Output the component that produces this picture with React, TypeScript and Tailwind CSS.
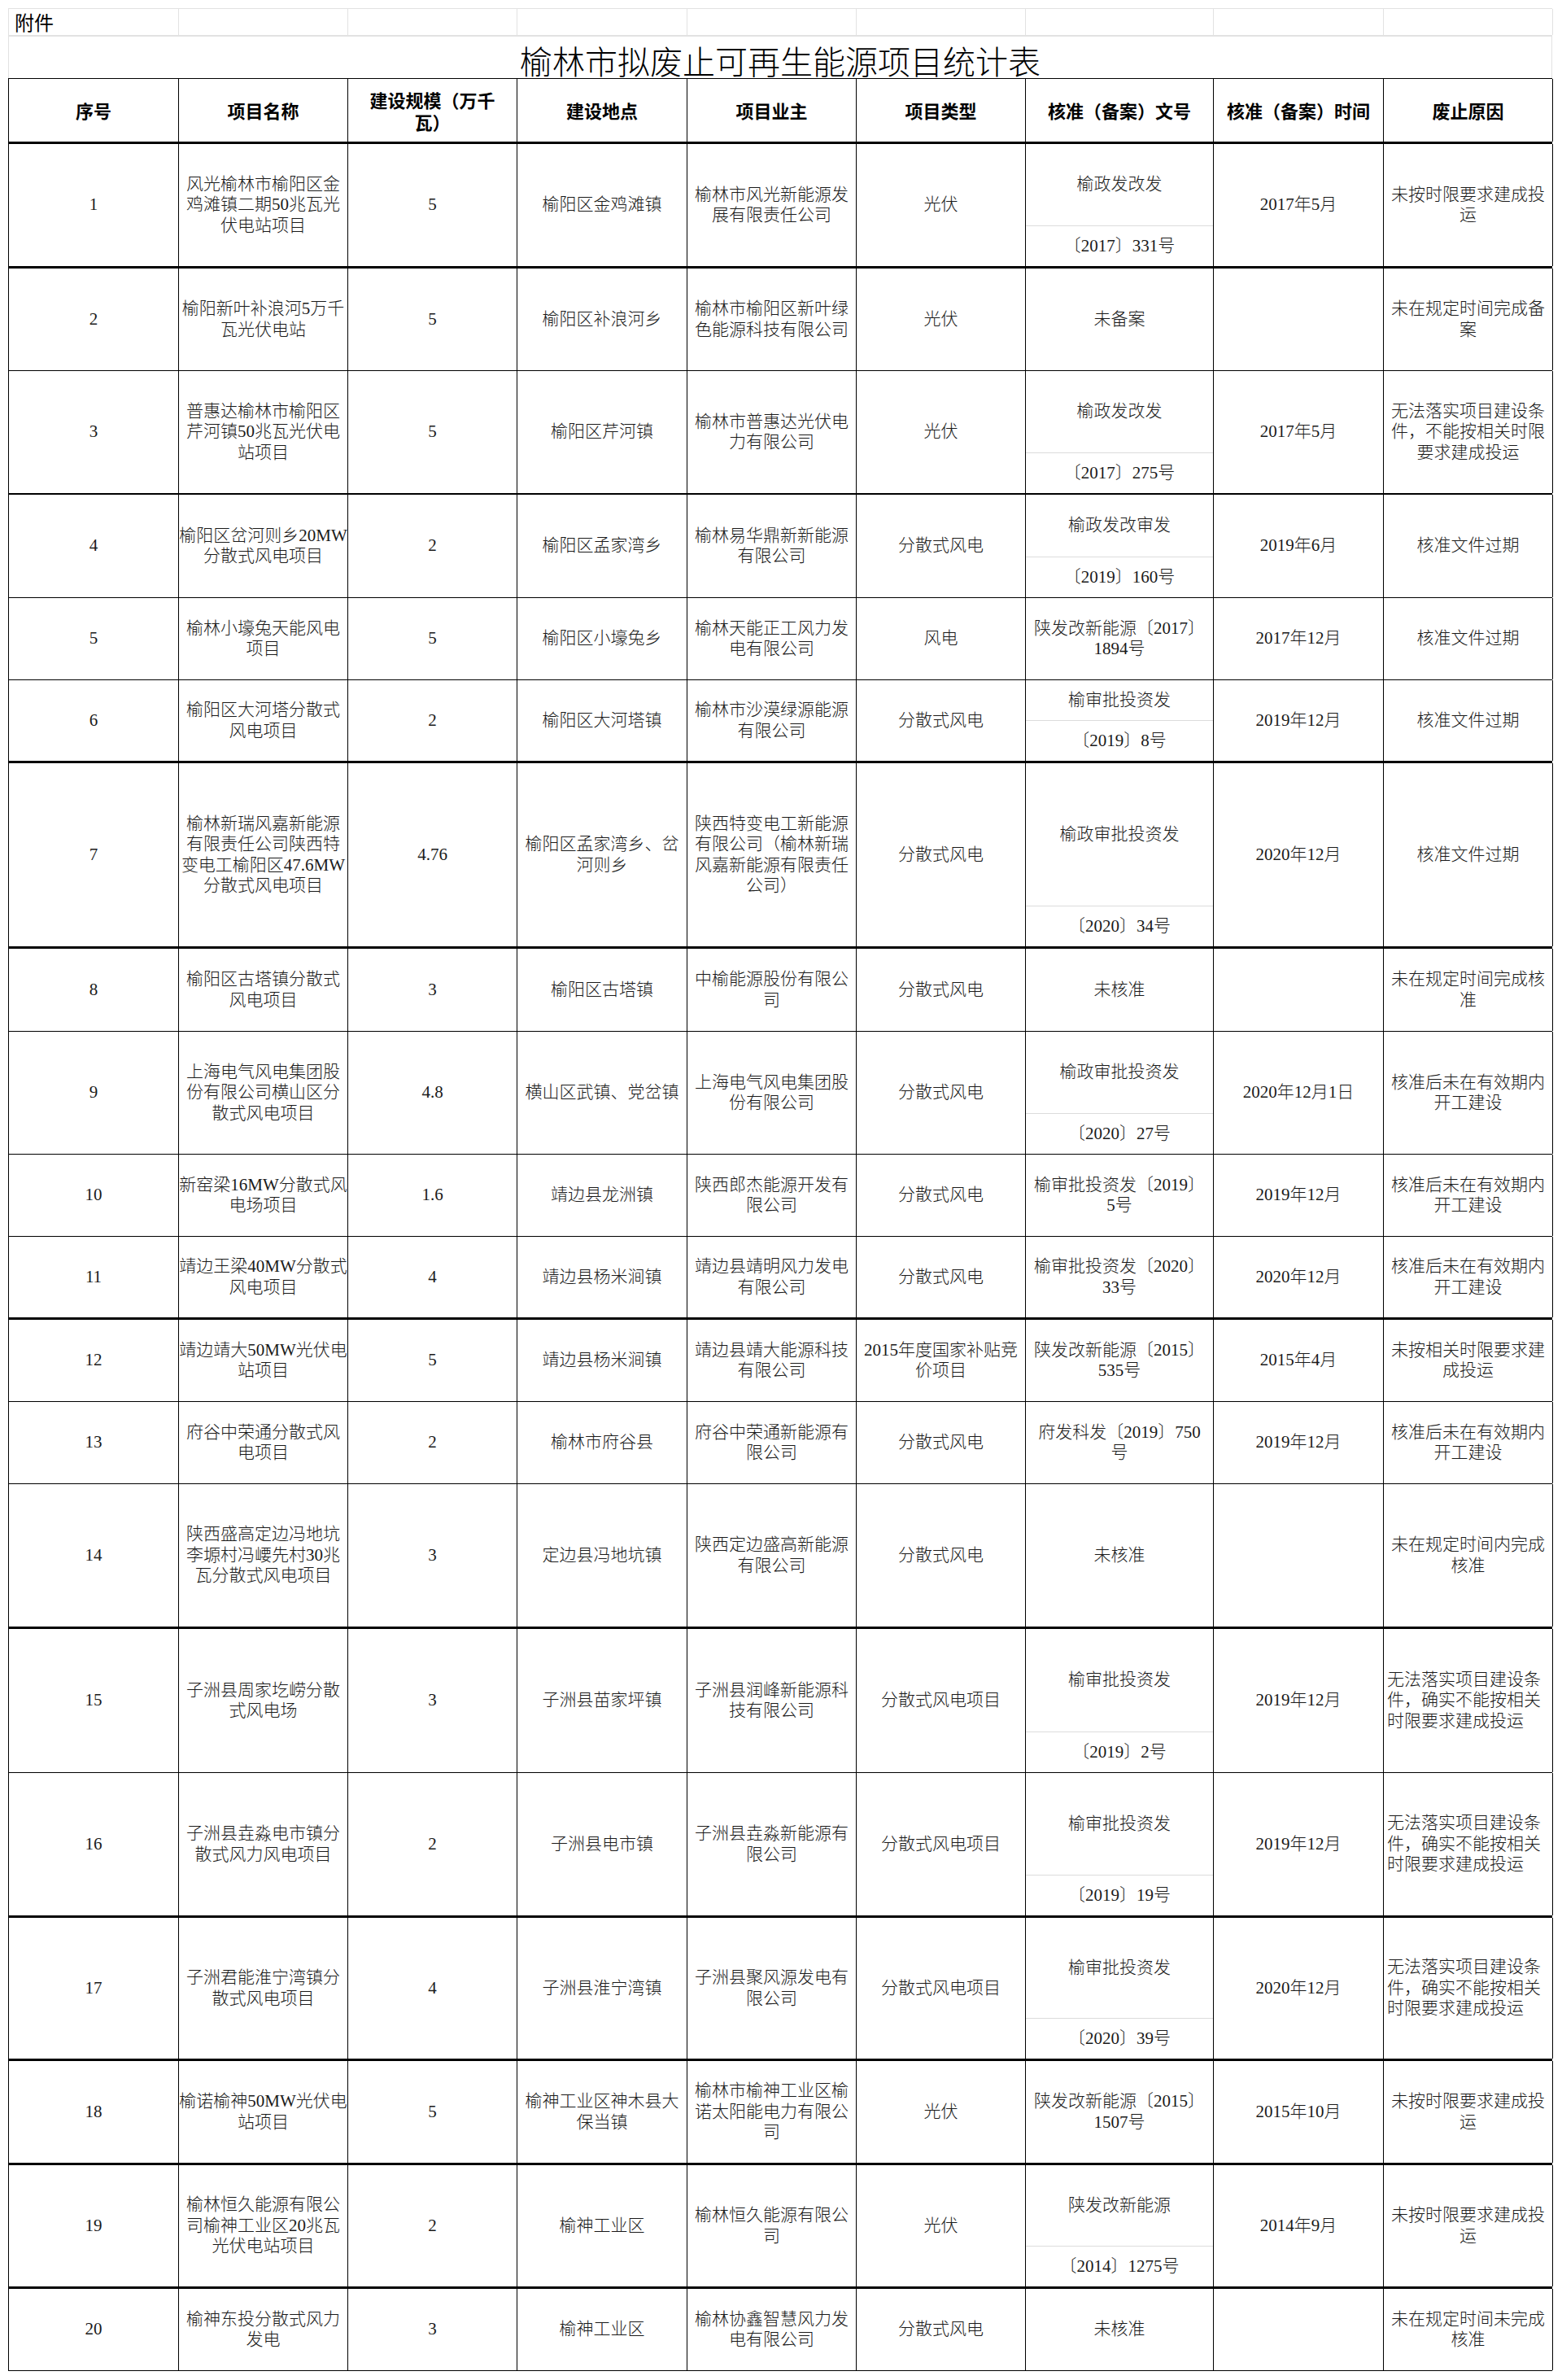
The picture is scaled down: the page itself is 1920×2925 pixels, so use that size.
import React from 'react'

const COLS = 'grid grid-cols-[209px_208px_208px_209px_208px_208px_231px_209px_208px]'

type Split = { top: string; bottom: string }

type RowData = {
  no: string
  h: number
  border?: 1 | 2 | 3
  name: string[]
  scale: string
  loc: string[]
  owner: string[]
  type: string[]
  doc: string[] | Split
  time: string
  reason: string[]
  left?: boolean
}

const NO_TIME_REASON = ['无法落实项目建设条', '件，确实不能按相关', '时限要求建成投运']

const ROWS: RowData[] = [
  { no: '1', h: 153, border: 3, name: ['风光榆林市榆阳区金', '鸡滩镇二期50兆瓦光', '伏电站项目'], scale: '5', loc: ['榆阳区金鸡滩镇'], owner: ['榆林市风光新能源发', '展有限责任公司'], type: ['光伏'], doc: { top: '榆政发改发', bottom: '〔2017〕331号' }, time: '2017年5月', reason: ['未按时限要求建成投', '运'] },
  { no: '2', h: 126, name: ['榆阳新叶补浪河5万千', '瓦光伏电站'], scale: '5', loc: ['榆阳区补浪河乡'], owner: ['榆林市榆阳区新叶绿', '色能源科技有限公司'], type: ['光伏'], doc: ['未备案'], time: '', reason: ['未在规定时间完成备', '案'] },
  { no: '3', h: 152, border: 2, name: ['普惠达榆林市榆阳区', '芹河镇50兆瓦光伏电', '站项目'], scale: '5', loc: ['榆阳区芹河镇'], owner: ['榆林市普惠达光伏电', '力有限公司'], type: ['光伏'], doc: { top: '榆政发改发', bottom: '〔2017〕275号' }, time: '2017年5月', reason: ['无法落实项目建设条', '件，不能按相关时限', '要求建成投运'] },
  { no: '4', h: 127, name: ['榆阳区岔河则乡20MW', '分散式风电项目'], scale: '2', loc: ['榆阳区孟家湾乡'], owner: ['榆林易华鼎新新能源', '有限公司'], type: ['分散式风电'], doc: { top: '榆政发改审发', bottom: '〔2019〕160号' }, time: '2019年6月', reason: ['核准文件过期'] },
  { no: '5', h: 101, name: ['榆林小壕兔天能风电', '项目'], scale: '5', loc: ['榆阳区小壕兔乡'], owner: ['榆林天能正工风力发', '电有限公司'], type: ['风电'], doc: ['陕发改新能源〔2017〕', '1894号'], time: '2017年12月', reason: ['核准文件过期'] },
  { no: '6', h: 102, border: 3, name: ['榆阳区大河塔分散式', '风电项目'], scale: '2', loc: ['榆阳区大河塔镇'], owner: ['榆林市沙漠绿源能源', '有限公司'], type: ['分散式风电'], doc: { top: '榆审批投资发', bottom: '〔2019〕8号' }, time: '2019年12月', reason: ['核准文件过期'] },
  { no: '7', h: 228, border: 3, name: ['榆林新瑞风嘉新能源', '有限责任公司陕西特', '变电工榆阳区47.6MW', '分散式风电项目'], scale: '4.76', loc: ['榆阳区孟家湾乡、岔', '河则乡'], owner: ['陕西特变电工新能源', '有限公司（榆林新瑞', '风嘉新能源有限责任', '公司）'], type: ['分散式风电'], doc: { top: '榆政审批投资发', bottom: '〔2020〕34号' }, time: '2020年12月', reason: ['核准文件过期'] },
  { no: '8', h: 102, name: ['榆阳区古塔镇分散式', '风电项目'], scale: '3', loc: ['榆阳区古塔镇'], owner: ['中榆能源股份有限公', '司'], type: ['分散式风电'], doc: ['未核准'], time: '', reason: ['未在规定时间完成核', '准'] },
  { no: '9', h: 151, name: ['上海电气风电集团股', '份有限公司横山区分', '散式风电项目'], scale: '4.8', loc: ['横山区武镇、党岔镇'], owner: ['上海电气风电集团股', '份有限公司'], type: ['分散式风电'], doc: { top: '榆政审批投资发', bottom: '〔2020〕27号' }, time: '2020年12月1日', reason: ['核准后未在有效期内', '开工建设'] },
  { no: '10', h: 101, name: ['新窑梁16MW分散式风', '电场项目'], scale: '1.6', loc: ['靖边县龙洲镇'], owner: ['陕西郎杰能源开发有', '限公司'], type: ['分散式风电'], doc: ['榆审批投资发〔2019〕', '5号'], time: '2019年12月', reason: ['核准后未在有效期内', '开工建设'] },
  { no: '11', h: 102, border: 3, name: ['靖边王梁40MW分散式', '风电项目'], scale: '4', loc: ['靖边县杨米涧镇'], owner: ['靖边县靖明风力发电', '有限公司'], type: ['分散式风电'], doc: ['榆审批投资发〔2020〕', '33号'], time: '2020年12月', reason: ['核准后未在有效期内', '开工建设'] },
  { no: '12', h: 101, name: ['靖边靖大50MW光伏电', '站项目'], scale: '5', loc: ['靖边县杨米涧镇'], owner: ['靖边县靖大能源科技', '有限公司'], type: ['2015年度国家补贴竞', '价项目'], doc: ['陕发改新能源〔2015〕', '535号'], time: '2015年4月', reason: ['未按相关时限要求建', '成投运'] },
  { no: '13', h: 101, name: ['府谷中荣通分散式风', '电项目'], scale: '2', loc: ['榆林市府谷县'], owner: ['府谷中荣通新能源有', '限公司'], type: ['分散式风电'], doc: ['府发科发〔2019〕750', '号'], time: '2019年12月', reason: ['核准后未在有效期内', '开工建设'] },
  { no: '14', h: 178, border: 3, name: ['陕西盛高定边冯地坑', '李塬村冯崾先村30兆', '瓦分散式风电项目'], scale: '3', loc: ['定边县冯地坑镇'], owner: ['陕西定边盛高新能源', '有限公司'], type: ['分散式风电'], doc: ['未核准'], time: '', reason: ['未在规定时间内完成', '核准'] },
  { no: '15', h: 177, name: ['子洲县周家圪崂分散', '式风电场'], scale: '3', loc: ['子洲县苗家坪镇'], owner: ['子洲县润峰新能源科', '技有限公司'], type: ['分散式风电项目'], doc: { top: '榆审批投资发', bottom: '〔2019〕2号' }, time: '2019年12月', reason: NO_TIME_REASON, left: true },
  { no: '16', h: 178, border: 3, name: ['子洲县垚淼电市镇分', '散式风力风电项目'], scale: '2', loc: ['子洲县电市镇'], owner: ['子洲县垚淼新能源有', '限公司'], type: ['分散式风电项目'], doc: { top: '榆审批投资发', bottom: '〔2019〕19号' }, time: '2019年12月', reason: NO_TIME_REASON, left: true },
  { no: '17', h: 176, border: 3, name: ['子洲君能淮宁湾镇分', '散式风电项目'], scale: '4', loc: ['子洲县淮宁湾镇'], owner: ['子洲县聚风源发电有', '限公司'], type: ['分散式风电项目'], doc: { top: '榆审批投资发', bottom: '〔2020〕39号' }, time: '2020年12月', reason: NO_TIME_REASON, left: true },
  { no: '18', h: 128, border: 3, name: ['榆诺榆神50MW光伏电', '站项目'], scale: '5', loc: ['榆神工业区神木县大', '保当镇'], owner: ['榆林市榆神工业区榆', '诺太阳能电力有限公', '司'], type: ['光伏'], doc: ['陕发改新能源〔2015〕', '1507号'], time: '2015年10月', reason: ['未按时限要求建成投', '运'] },
  { no: '19', h: 152, border: 3, name: ['榆林恒久能源有限公', '司榆神工业区20兆瓦', '光伏电站项目'], scale: '2', loc: ['榆神工业区'], owner: ['榆林恒久能源有限公', '司'], type: ['光伏'], doc: { top: '陕发改新能源', bottom: '〔2014〕1275号' }, time: '2014年9月', reason: ['未按时限要求建成投', '运'] },
  { no: '20', h: 101, name: ['榆神东投分散式风力', '发电'], scale: '3', loc: ['榆神工业区'], owner: ['榆林协鑫智慧风力发', '电有限公司'], type: ['分散式风电'], doc: ['未核准'], time: '', reason: ['未在规定时间未完成', '核准'] },
]

const HEADERS: string[][] = [
  ['序号'],
  ['项目名称'],
  ['建设规模（万千', '瓦）'],
  ['建设地点'],
  ['项目业主'],
  ['项目类型'],
  ['核准（备案）文号'],
  ['核准（备案）时间'],
  ['废止原因'],
]

function Lines({ lines }: { lines: string[] }) {
  return (
    <div>
      {lines.map((l, i) => (
        <div key={i} className="whitespace-nowrap">
          {l}
        </div>
      ))}
    </div>
  )
}

function Cell({ lines, last, left }: { lines: string[]; last?: boolean; left?: boolean }) {
  return (
    <div
      className={`flex items-center ${left ? 'justify-start pl-[4px] text-left' : 'justify-center text-center'} ${
        last ? '' : 'border-r border-black'
      }`}
    >
      <Lines lines={lines} />
    </div>
  )
}

function DocCell({ doc }: { doc: string[] | Split }) {
  if (Array.isArray(doc)) return <Cell lines={doc} />
  return (
    <div className="flex flex-col border-r border-black">
      <div className="flex flex-1 items-center justify-center whitespace-nowrap">{doc.top}</div>
      <div className="flex h-[50px] items-center justify-center whitespace-nowrap border-t border-[#dcdcdc]">
        {doc.bottom}
      </div>
    </div>
  )
}

function TableRow({ row }: { row: RowData }) {
  const b = row.border === 3 ? 'border-b-[3px]' : row.border === 2 ? 'border-b-2' : 'border-b'
  return (
    <div className={`${COLS} border-l border-black ${b}`} style={{ height: row.h }}>
      <Cell lines={[row.no]} />
      <Cell lines={row.name} />
      <Cell lines={[row.scale]} />
      <Cell lines={row.loc} />
      <Cell lines={row.owner} />
      <Cell lines={row.type} />
      <DocCell doc={row.doc} />
      <Cell lines={[row.time]} />
      <Cell lines={row.reason} left={row.left} />
    </div>
  )
}

export default function App() {
  return (
    <div className="h-[2925px] w-[1920px] bg-white pt-[10px] text-[#1a1a1a]">
      <div className="ml-[10px] w-[1898px]">
        {/* sheet grid row */}
        <div className={`${COLS} h-[35px] border-b-2 border-t border-l border-[#e2e2e2]`}>
          {HEADERS.map((_, i) => (
            <div key={i} className="flex items-center border-r border-[#e2e2e2] pl-[7px]">
              {i === 0 && (
                <span className="font-['Noto_Sans_CJK_SC',sans-serif] text-[24px] leading-none text-black">附件</span>
              )}
            </div>
          ))}
        </div>

        {/* title */}
        <div className="flex h-[51px] items-center justify-center border-l border-r border-[#e2e2e2] pt-[7px]">
          <span className="font-['Noto_Sans_CJK_SC',sans-serif] text-[40px] font-light leading-none text-black">
            榆林市拟废止可再生能源项目统计表
          </span>
        </div>

        {/* table */}
        <div className="border-t border-black font-['Liberation_Serif','Noto_Sans_CJK_SC',serif] text-[21px] font-light leading-[25.5px]">
          <div
            className={`${COLS} h-[80px] border-b-[3px] border-l border-black font-['Noto_Sans_CJK_SC',sans-serif] text-[22px] font-bold leading-[27px] text-black`}
          >
            {HEADERS.map((h, i) => (
              <Cell key={i} lines={h} />
            ))}
          </div>
          {ROWS.map((r) => (
            <TableRow key={r.no} row={r} />
          ))}
        </div>
      </div>
    </div>
  )
}
